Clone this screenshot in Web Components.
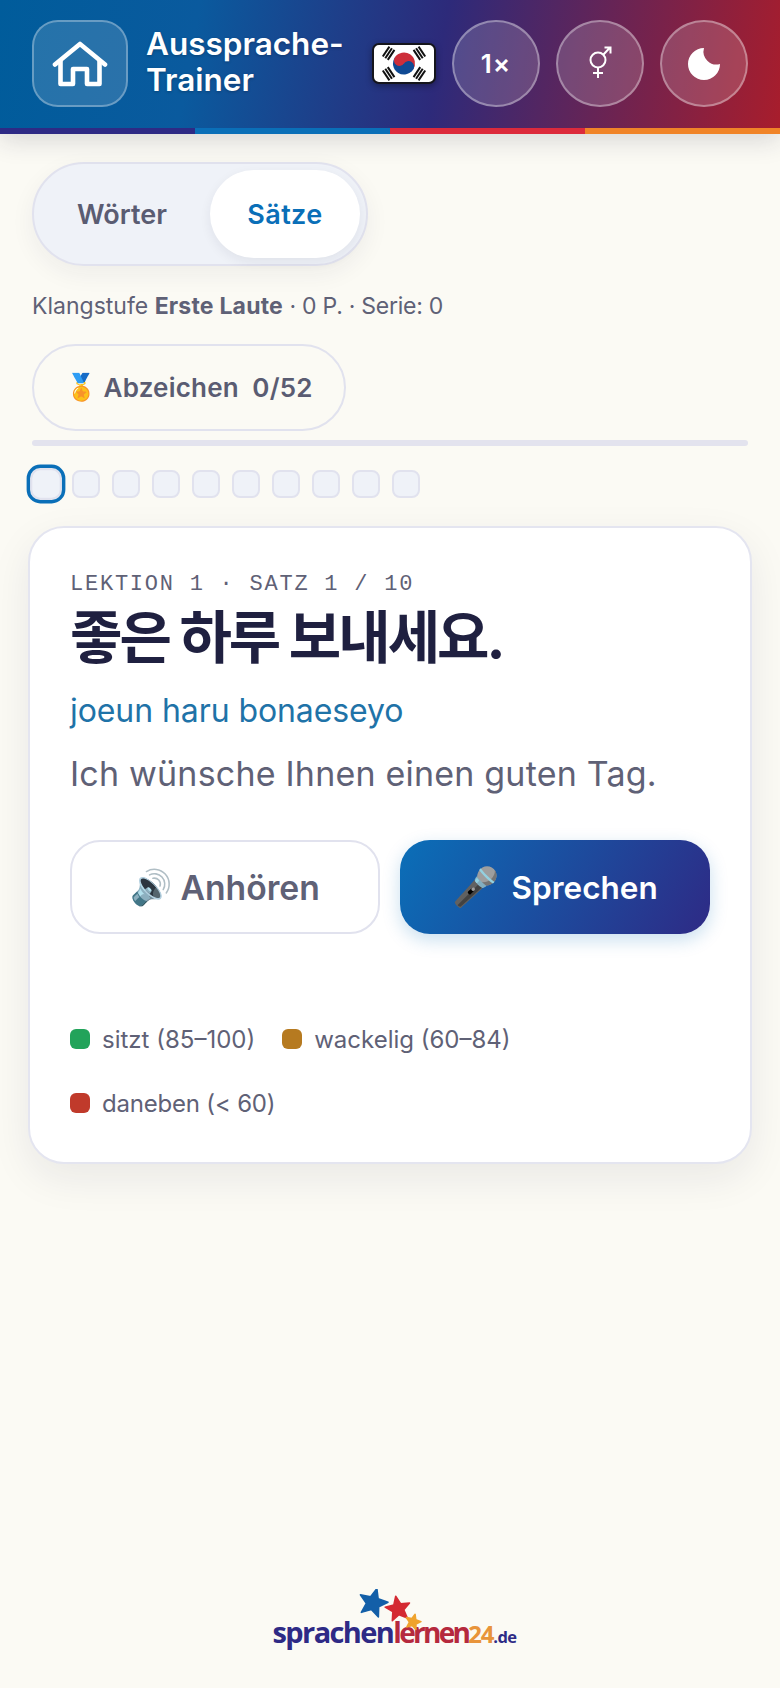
<!DOCTYPE html>
<html lang="de">
<head>
<meta charset="utf-8">
<title>Aussprache-Trainer</title>
<style>
  html, body { margin: 0; padding: 0; }
  body {
    width: 780px;
    height: 1688px;
    overflow: hidden;
    display: flex;
    flex-direction: column;
    background: #fbfaf4;
    color: #5f6176;
    font-family: Inter, "Noto Sans", sans-serif;
  }
</style>
</head>
<body>
<trainer-header title-text="Aussprache-Trainer">
  <round-btn slot="actions">1×</round-btn>
  <round-btn slot="actions" icon="gender"></round-btn>
  <round-btn slot="actions" icon="moon"></round-btn>
</trainer-header>

<trainer-main>
  <mode-tabs></mode-tabs>
  <level-line>Klangstufe <b style="letter-spacing:.2px">Erste Laute</b> <span style="letter-spacing:-.25px">· 0 P. · Serie: 0</span></level-line>
  <badge-pill>Abzeichen&nbsp; 0/52</badge-pill>
  <step-track count="10"></step-track>
  <lesson-card>
    <span slot="eyebrow">LEKTION 1 · SATZ 1 / 10</span>
    <span slot="phrase" lang="ko">좋은 하루 보내세요.</span>
    <span slot="roman">joeun haru bonaeseyo</span>
    <span slot="meaning">Ich wünsche Ihnen einen guten Tag.</span>
    <action-btn slot="actions" emoji="🔊">Anhören</action-btn>
    <action-btn slot="actions" emoji="🎤" primary>Sprechen</action-btn>
    <legend-item slot="legend" color="#22a35a">sitzt (85–100)</legend-item>
    <legend-item slot="legend" color="#b67a20">wackelig (60–84)</legend-item>
    <legend-item slot="legend" color="#c03a2b" style="letter-spacing:-.2px">daneben (&lt; 60)</legend-item>
  </lesson-card>
</trainer-main>

<site-logo></site-logo>

<script>
  // kleine Hilfe: Schattenwurzel aus einem String bauen
  class BaseEl extends HTMLElement {
    render(html) {
      if (!this.shadowRoot) this.attachShadow({ mode: 'open' })
      this.shadowRoot.innerHTML = html
    }
  }

  class TrainerHeader extends BaseEl {
    connectedCallback() {
      const bars = `<rect x="-22.5" y="-6" width="2" height="12"/><rect x="-19.5" y="-6" width="2" height="12"/><rect x="-16.5" y="-6" width="2" height="12"/>
        <rect x="14.5" y="-6" width="2" height="12"/><rect x="17.5" y="-6" width="2" height="12"/><rect x="20.5" y="-6" width="2" height="12"/>`
      this.render(`
      <style>
        :host { display: block; flex: none; position: relative; z-index: 2; box-shadow: 0 6px 24px rgba(30,30,60,.16); }
        .bar {
          height: 128px;
          box-sizing: border-box;
          padding: 20px 32px 21px;
          display: flex;
          align-items: center;
          background: linear-gradient(100deg, #005c9b 0%, #0a5a9e 25%, #2d2a7a 56%, #a81d2c 100%);
          color: #fff;
        }
        .home {
          width: 96px; height: 87px; flex: none; box-sizing: border-box;
          display: flex; align-items: center; justify-content: center;
          border: 2px solid rgba(255,255,255,.3);
          border-radius: 26px;
          background: rgba(255,255,255,.14);
        }
        h1 {
          margin: 0 18px 3px 18px; width: 208px; flex: none;
          font-size: 31.5px; line-height: 36px; font-weight: 600;
          text-shadow: 0 1px 3px rgba(0,0,0,.25);
        }
        .flag { flex: none; width: 64px; height: 41px; margin-right: 16px; filter: drop-shadow(0 2px 3px rgba(0,0,0,.35)); }
        .actions { display: flex; gap: 16px; flex: none; }
        .stripe { display: flex; height: 6px; }
        .stripe i { flex: 1; }
      </style>
      <div class="bar">
        <div class="home">
          <svg width="56" height="46" viewBox="0 0 56 46" fill="none" stroke="#fff" stroke-width="4.6" stroke-linecap="round" stroke-linejoin="round">
            <path d="M3 23.5 28 3l25 20.5"/>
            <path d="M8.5 20v23H21V28h14v15h12.5V20"/>
          </svg>
        </div>
        <h1>${this.getAttribute('title-text')}</h1>
        <svg class="flag" viewBox="0 0 64 41">
          <rect x="1" y="1" width="62" height="39" rx="6" fill="#fff" stroke="#15151c" stroke-width="2"/>
          <g transform="translate(32 20.5) rotate(33.7)">
            <path d="M-11 0a11 11 0 0 1 22 0z" fill="#cd2e3a"/>
            <path d="M-11 0a11 11 0 0 0 22 0z" fill="#0f4a94"/>
            <circle cx="-5.5" r="5.5" fill="#cd2e3a"/>
            <circle cx="5.5" r="5.5" fill="#0f4a94"/>
          </g>
          <g fill="#111">
            <g transform="translate(32 20.5) rotate(33.7)">${bars}</g>
            <g transform="translate(32 20.5) rotate(-33.7)">${bars}</g>
          </g>
        </svg>
        <div class="actions"><slot name="actions"></slot></div>
      </div>
      <div class="stripe">
        <i style="background:#2e2a85"></i><i style="background:#0a6fb8"></i><i style="background:#dc2a3c"></i><i style="background:#f08428"></i>
      </div>`)
    }
  }

  class RoundBtn extends BaseEl {
    connectedCallback() {
      const icon = this.getAttribute('icon')
      let inner = '<slot></slot>'
      if (icon === 'moon') {
        inner = `<svg width="32" height="32" viewBox="0 0 32 32"><path d="M16 0A16 16 0 1 0 32 16 13 13 0 0 1 16 0Z" fill="#fff"/></svg>`
      } else if (icon === 'gender') {
        inner = `<svg width="26" height="34" viewBox="0 0 26 34" fill="none" stroke="#fff" stroke-width="2" style="margin-top:-4px">
          <circle cx="11" cy="15" r="7.5"/>
          <path d="M11 22.5V33M6 28h10M16.5 9.5 23 2.5M17.5 2.5H23.5V8.5"/>
        </svg>`
      }
      this.render(`
      <style>
        :host {
          display: flex; align-items: center; justify-content: center;
          width: 88px; height: 87px; box-sizing: border-box;
          border: 2px solid rgba(255,255,255,.35);
          border-radius: 50%;
          background: rgba(255,255,255,.16);
          color: #fff; font-size: 26px; font-weight: 600; letter-spacing: 1px;
        }
      </style>${inner}`)
    }
  }

  class TrainerMain extends BaseEl {
    connectedCallback() {
      this.render(`
      <style>
        :host { display: flex; flex-direction: column; align-items: flex-start; padding: 28px 32px 0; }
      </style><slot></slot>`)
    }
  }

  class ModeTabs extends BaseEl {
    connectedCallback() {
      this.render(`
      <style>
        :host {
          display: flex; box-sizing: border-box; height: 104px; width: 336px;
          padding: 6px; border: 2px solid #e1e2ee; border-radius: 52px;
          background: #eff2f8;
          box-shadow: 0 8px 24px rgba(30,30,60,.06);
          font-size: 27px; font-weight: 600;
        }
        div { display: flex; align-items: center; justify-content: center; border-radius: 44px; flex: none; }
        .off { width: 170px; padding-right: 6px; box-sizing: border-box; color: #5a5c72; }
        .on { width: 150px; background: #fff; color: #0a6fb8; letter-spacing: .4px; box-shadow: 0 4px 12px rgba(30,30,60,.07); }
      </style>
      <div class="off">Wörter</div><div class="on">Sätze</div>`)
    }
  }

  class LevelLine extends BaseEl {
    connectedCallback() {
      this.render(`
      <style>
        :host { display: block; margin-top: 24px; font-size: 23px; line-height: 32px; color: #5f6176; }
      </style><slot></slot>`)
    }
  }

  class BadgePill extends BaseEl {
    connectedCallback() {
      this.render(`
      <style>
        :host {
          display: flex; align-items: center; gap: 6px; box-sizing: border-box;
          margin-top: 22px; height: 87px; width: 314px; padding: 0 0 1px 31px;
          border: 2px solid #e1e2ee; border-radius: 44px;
          font-size: 26px; font-weight: 600; color: #5a5c72; letter-spacing: .2px;
          white-space: pre;
        }
        .e { font-family: "Noto Color Emoji", sans-serif; font-size: 26px; }
      </style><span class="e">🏅</span><slot></slot>`)
    }
  }

  class StepTrack extends BaseEl {
    connectedCallback() {
      const n = Number(this.getAttribute('count'))
      let dots = ''
      for (let i = 0; i < n; i++) {
        dots += `<i class="${i === 0 ? 'cur' : ''}"></i>`
      }
      this.render(`
      <style>
        :host { display: block; align-self: stretch; margin-top: 9px; }
        .line { height: 6px; border-radius: 3px; background: #e3e3ee; }
        .dots { display: flex; gap: 12px; margin-top: 24px; }
        i { width: 28px; height: 28px; box-sizing: border-box; border: 2px solid #e1e2ee; border-radius: 8px; background: #eff2f8; }
        i.cur { transform: scale(1.14); outline: 3px solid #0a6fb8; outline-offset: 0; border-radius: 9px; }
      </style>
      <div class="line"></div>
      <div class="dots">${dots}</div>`)
    }
  }

  class LessonCard extends BaseEl {
    connectedCallback() {
      this.render(`
      <style>
        :host {
          display: block; box-sizing: border-box; align-self: stretch;
          margin: 28px -4px 0; height: 638px; padding: 44px 40px 0;
          background: #fff; border: 2px solid #e4e5f0; border-radius: 36px;
          box-shadow: 0 14px 40px rgba(30,30,60,.08);
        }
        .eyebrow { font: 22px/26px "Liberation Mono", monospace; letter-spacing: 1.76px; color: #5f6176; }
        /* Inter zuerst, Hangul kommt aus dem CJK-Fallback */
        .phrase { margin-top: 6px; font: 700 57px/68px Inter, "Noto Sans CJK KR", sans-serif; color: #1f2040; letter-spacing: -3px; }
        .roman { margin-top: 19px; font-size: 32px; line-height: 40px; color: #1f73a8; letter-spacing: -.08px; }
        .meaning { margin-top: 21px; font-size: 34px; line-height: 44px; color: #5f6176; letter-spacing: .2px; }
        .actions { display: grid; grid-template-columns: 1fr 1fr; gap: 20px; margin-top: 44px; }
        .legend { display: flex; flex-wrap: wrap; gap: 28px 27px; width: 500px; margin-top: 87px; }
      </style>
      <div class="eyebrow"><slot name="eyebrow"></slot></div>
      <div class="phrase"><slot name="phrase"></slot></div>
      <div class="roman"><slot name="roman"></slot></div>
      <div class="meaning"><slot name="meaning"></slot></div>
      <div class="actions"><slot name="actions"></slot></div>
      <div class="legend"><slot name="legend"></slot></div>`)
    }
  }

  class ActionBtn extends BaseEl {
    connectedCallback() {
      this.render(`
      <style>
        :host {
          display: flex; align-items: center; justify-content: center; gap: 8px;
          height: 94px; box-sizing: border-box; border-radius: 30px;
          font-size: 33.7px; font-weight: 600;
          border: 2px solid #e1e2ee; color: #5f6176; background: #fff;
        }
        :host([primary]) {
          border: 0; color: #fff; font-size: 31.5px; gap: 12px;
          background: linear-gradient(120deg, #0a6fb8, #2e2a85);
          box-shadow: 0 6px 18px rgba(10,111,184,.22);
        }
        .e { font-family: "Noto Color Emoji", sans-serif; font-size: 34px; }
        :host([primary]) .e { font-size: 38px; }
      </style><span class="e">${this.getAttribute('emoji')}</span><slot></slot>`)
    }
  }

  class LegendItem extends BaseEl {
    connectedCallback() {
      this.render(`
      <style>
        :host { display: flex; align-items: center; gap: 12px; height: 36px; font-size: 24px; color: #5f6176; }
        i { width: 20px; height: 20px; border-radius: 6px; background: ${this.getAttribute('color')}; }
      </style><i></i><slot></slot>`)
    }
  }

  class SiteLogo extends BaseEl {
    connectedCallback() {
      const star = (cx, cy, r, rot, fill) => {
        let pts = []
        for (let i = 0; i < 10; i++) {
          const rad = i % 2 ? r * 0.45 : r
          const a = (rot + i * 36 - 90) * Math.PI / 180
          pts.push((cx + rad * Math.cos(a)).toFixed(1) + ',' + (cy + rad * Math.sin(a)).toFixed(1))
        }
        return `<polygon points="${pts.join(' ')}" fill="${fill}" stroke="${fill}" stroke-width="1.5" stroke-linejoin="round"/>`
      }
      this.render(`
      <style>
        :host {
          display: block; position: relative; margin: auto auto 34px; left: 3.5px;
          width: 242px; padding-top: 26px;
          font: 700 29px/34px "Open Sans", sans-serif; letter-spacing: -1.6px; white-space: nowrap;
        }
        svg { position: absolute; left: 79px; top: 0; width: 80px; height: 50px; }
        .a { color: #2e2a85; }
        .b { color: #b5293d; font-size: 28px; letter-spacing: -2.7px; }
        .c { color: #e8943a; font-size: 24px; letter-spacing: -1.2px; }
        .d { color: #2e2a85; font-size: 16.5px; letter-spacing: -.6px; }
      </style>
      <svg viewBox="0 0 80 50">
        ${star(21, 14, 15, 15, '#135fa8')}
        ${star(46, 20, 13, -10, '#d42a32')}
        ${star(61, 33, 8, 15, '#efa32d')}
      </svg>
      <span class="a">sprachen</span><span class="b">lernen</span><span class="c">24</span><span class="d">.de</span>`)
    }
  }

  customElements.define('trainer-header', TrainerHeader)
  customElements.define('round-btn', RoundBtn)
  customElements.define('trainer-main', TrainerMain)
  customElements.define('mode-tabs', ModeTabs)
  customElements.define('level-line', LevelLine)
  customElements.define('badge-pill', BadgePill)
  customElements.define('step-track', StepTrack)
  customElements.define('lesson-card', LessonCard)
  customElements.define('action-btn', ActionBtn)
  customElements.define('legend-item', LegendItem)
  customElements.define('site-logo', SiteLogo)
</script>
</body>
</html>
